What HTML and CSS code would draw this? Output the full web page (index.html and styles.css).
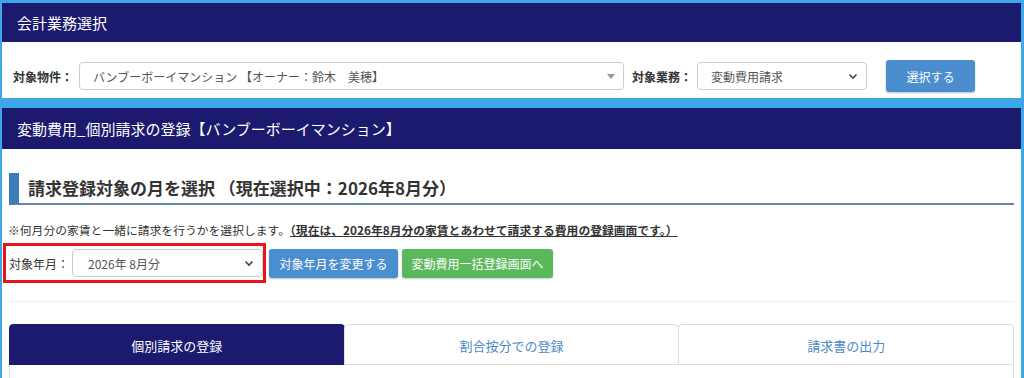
FILE: index.html
```html
<!DOCTYPE html>
<html lang="ja">
<head>
<meta charset="utf-8">
<title>会計業務選択</title>
<link rel="stylesheet" href="styles.css">
</head>
<body>
<div class="page">
  <section class="panel">
    <div class="panel-head">会計業務選択</div>
    <div class="panel-body select-row">
      <span class="label lbl-prop">対象物件：</span>
      <div class="select sel-prop">
        <span class="sel-text">バンブーボーイマンション 【オーナー：鈴木　美穂】</span>
        <svg class="caret" width="8" height="5" viewBox="0 0 8 5"><path d="M0 0 L8 0 L4 5 Z" fill="#999"/></svg>
      </div>
      <span class="label lbl-task">対象業務：</span>
      <div class="select sel-task">
        <span class="sel-text">変動費用請求</span>
        <svg class="chev" width="10" height="7" viewBox="0 0 10 7"><path d="M1.5 1.5 L5 5 L8.5 1.5" fill="none" stroke="#444" stroke-width="1.6"/></svg>
      </div>
      <button class="btn btn-blue btn-select">選択する</button>
    </div>
  </section>

  <section class="panel panel2">
    <div class="panel-head head2">変動費用_個別請求の登録【バンブーボーイマンション】</div>
    <div class="panel-body body2">
      <h2 class="sec-title">請求登録対象の月を選択 （現在選択中：2026年8月分）</h2>
      <p class="note">※何月分の家賃と一緒に請求を行うかを選択します。<strong class="note-strong">（現在は、2026年8月分の家賃とあわせて請求する費用の登録画面です。）</strong></p>
      <div class="month-row">
        <div class="mark">
          <span class="label-normal">対象年月：</span>
          <div class="select sel-month">
            <span class="sel-text">2026年 8月分</span>
            <svg class="chev" width="10" height="7" viewBox="0 0 10 7"><path d="M1.5 1.5 L5 5 L8.5 1.5" fill="none" stroke="#444" stroke-width="1.6"/></svg>
          </div>
        </div>
        <button class="btn btn-blue btn-sm btn-change">対象年月を変更する</button>
        <button class="btn btn-green btn-sm">変動費用一括登録画面へ</button>
      </div>
      <hr class="divider">
      <div class="tabs">
        <div class="tab active">個別請求の登録</div>
        <div class="tab">割合按分での登録</div>
        <div class="tab">請求書の出力</div>
      </div>
      <div class="tab-content"></div>
    </div>
  </section>
</div>
</body>
</html>
```
FILE: styles.css
```css
* { box-sizing: border-box; }
html, body { margin: 0; padding: 0; }
body {
  background: #3ea7e8;
  font-family: "Noto Sans CJK JP", "Noto Sans", sans-serif;
  color: #333;
  width: 1024px;
  height: 378px;
  overflow: hidden;
}
.page {
  padding: 3px 3px 0 2px;
}
.panel {
  background: #fff;
}
.panel2 {
  margin-top: 10px;
  height: 270px;
  overflow: hidden;
}
.panel-head {
  background: #1b1a6f;
  color: #fff;
  font-size: 15px;
  height: 39px;
  line-height: 39px;
  padding-left: 15px;
}
.head2 {
  height: 41px;
  line-height: 41px;
}
.select-row {
  display: flex;
  align-items: center;
  padding: 18px 11px 6px 11px;
}
.label {
  font-size: 12px;
  font-weight: bold;
  color: #333;
}
.lbl-prop { margin-right: 6px; }
.lbl-task { margin-left: 8px; margin-right: 5px; }
.select {
  display: flex;
  align-items: center;
  justify-content: space-between;
  height: 28px;
  border: 1px solid #ccc;
  border-radius: 4px;
  background: #fff;
  padding: 0 8px 0 13px;
  font-size: 12px;
  color: #555;
}
.sel-prop { width: 545px; }
.sel-task { width: 170px; }
.sel-month { width: 191px; padding-left: 15px; }
.sel-text { white-space: nowrap; }
.btn {
  border: none;
  color: #fff;
  font-family: inherit;
  font-size: 12px;
  border-radius: 3px;
  cursor: pointer;
}
.btn-blue { background: #4a8ecf; box-shadow: 0 1px 2px rgba(0,0,0,0.25); }
.btn-green { background: #5cb85c; box-shadow: 0 1px 2px rgba(0,0,0,0.2); }
.btn-select {
  margin-left: 19px;
  height: 32px;
  width: 89px;
  padding: 0;
}
.body2 {
  padding: 24px 7px 0 7px;
}
.sec-title {
  margin: 0;
  font-size: 17px;
  font-weight: bold;
  color: #333;
  height: 32px;
  line-height: 29px;
  padding-left: 9px;
  border-left: 10px solid #3d7dbb;
  border-bottom: 2px solid #5e88ad;
}
.note {
  margin: 17px 0 0 -1px;
  font-size: 11.8px;
  line-height: 16px;
  color: #333;
  white-space: nowrap;
}
.note-strong {
  text-decoration: underline;
}
.month-row {
  display: flex;
  align-items: center;
  margin-top: 5px;
}
.mark {
  display: flex;
  align-items: center;
  margin-left: -6px;
  border: 3px solid #e8141b;
  padding: 3px 0 3px 3px;
}
.label-normal {
  font-size: 12px;
  color: #333;
  margin-right: 3px;
}
.btn-sm {
  height: 29px;
  padding: 0;
}
.btn-change { margin-left: 3px; width: 129px; }
.btn-green { margin-left: 4px; width: 151px; }
.divider {
  border: none;
  border-top: 1px solid #eee;
  margin: 18px 0 0 0;
}
.tabs {
  display: flex;
  margin-top: 22px;
}
.tab {
  flex: 1;
  height: 41px;
  line-height: 41px;
  text-align: center;
  font-size: 13px;
  color: #4b8bc7;
  border: 1px solid #ddd;
  border-radius: 4px 4px 0 0;
  background: #fff;
}
.tab + .tab { margin-left: -1px; }
.tab.active {
  background: #1b1a6f;
  border-color: #1b1a6f;
  color: #fff;
}
.tab-content {
  border: 1px solid #ddd;
  border-top: none;
  height: 40px;
}
```
